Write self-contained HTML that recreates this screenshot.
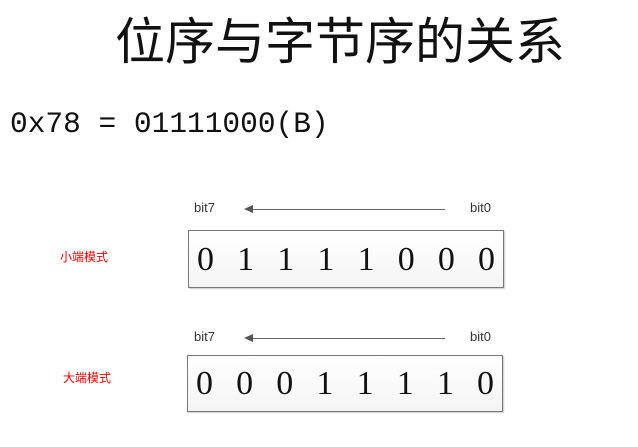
<!DOCTYPE html>
<html><head><meta charset="utf-8"><style>
body{margin:0;width:638px;height:447px;background:#fff;position:relative;overflow:hidden;font-family:"Liberation Sans","Noto Sans CJK SC",sans-serif}
.a{position:absolute;white-space:nowrap}
.title{left:115px;top:12px;font-size:50px;line-height:60px;color:#111;letter-spacing:0px}
.eq{left:10px;top:104px;font-family:"Liberation Mono",monospace;font-size:29.5px;line-height:40px;color:#111}
.box{position:absolute;border:1px solid #777;background:linear-gradient(#fff,#f4f4f4);box-shadow:1px 1px 1px #ccc}
.dg{position:absolute;font-family:"Liberation Serif",serif;font-size:34px;color:#111;display:flex;justify-content:space-between}
.bit{font-size:13px;color:#333}
.red{font-size:12px;color:#e00}
.ar{position:absolute;height:1px;background:#666}
</style></head><body>
<div class="a title">位序与字节序的关系</div>
<div class="a eq">0x78 = 01111000(B)</div>

<div class="a bit" style="left:194px;top:200px">bit7</div>
<div class="a bit" style="left:470px;top:200px">bit0</div>
<div class="ar" style="left:250px;top:209px;width:195px"></div>
<div class="a" style="left:244px;top:205px;width:0;height:0;border-top:4px solid transparent;border-bottom:4px solid transparent;border-right:9px solid #555"></div>
<div class="a red" style="left:60px;top:248px">小端模式</div>
<div class="box" style="left:188px;top:230px;width:314px;height:56px"></div>
<div class="dg" style="left:197px;top:240px;width:298px;line-height:40px"><span>0</span><span>1</span><span>1</span><span>1</span><span>1</span><span>0</span><span>0</span><span>0</span></div>

<div class="a bit" style="left:194px;top:329px">bit7</div>
<div class="a bit" style="left:470px;top:329px">bit0</div>
<div class="ar" style="left:250px;top:338px;width:195px"></div>
<div class="a" style="left:244px;top:334px;width:0;height:0;border-top:4px solid transparent;border-bottom:4px solid transparent;border-right:9px solid #555"></div>
<div class="a red" style="left:63px;top:369px">大端模式</div>
<div class="box" style="left:187px;top:355px;width:314px;height:55px"></div>
<div class="dg" style="left:196px;top:364px;width:298px;line-height:40px"><span>0</span><span>0</span><span>0</span><span>1</span><span>1</span><span>1</span><span>1</span><span>0</span></div>
</body></html>
